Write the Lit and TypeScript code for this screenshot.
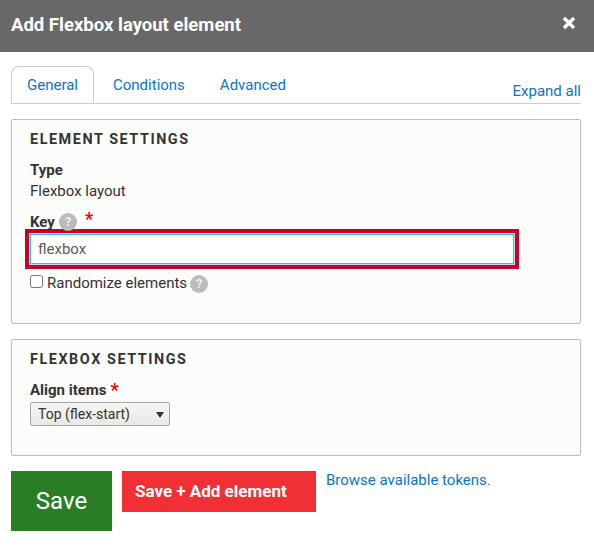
import { LitElement, css, html } from "lit";
import { customElement } from "lit/decorators.js";

@customElement("app-root")
export class AppRoot extends LitElement {
  helpIcon() {
    return html`<span class="help">?</span>`;
  }

  render() {
    return html`
      <div class="titlebar">
        <span class="title">Add Flexbox layout element</span>
        <svg class="close" width="14" height="14" viewBox="0 0 14 14">
          <path d="M2 2 L12 12 M12 2 L2 12" stroke="#fff" stroke-width="3.4" fill="none" />
        </svg>
      </div>
      <div class="content">
        <div class="tabs">
          <a class="tab active">General</a>
          <a class="tab">Conditions</a>
          <a class="tab">Advanced</a>
          <a class="expand">Expand all</a>
        </div>

        <section class="panel first">
          <h3>Element settings</h3>
          <div class="label type-label">Type</div>
          <div class="value">Flexbox layout</div>
          <div class="label key-label">
            Key ${this.helpIcon()} <span class="req key-req">*</span>
          </div>
          <input class="key-input" type="text" value="flexbox" />
          <label class="check">
            <input type="checkbox" />
            <span>Randomize elements</span>
            ${this.helpIcon()}
          </label>
        </section>

        <section class="panel second">
          <h3>Flexbox settings</h3>
          <div class="label align-label">Align items <span class="req">*</span></div>
          <div class="select">
            <span>Top (flex-start)</span>
            <i class="caret"></i>
          </div>
        </section>

        <div class="actions">
          <button class="save">Save</button>
          <button class="save-add">Save + Add element</button>
          <a class="tokens">Browse available tokens.</a>
        </div>
      </div>
    `;
  }

  static styles = css`
    :host {
      display: block;
      width: 594px;
      height: 548px;
      background: #fff;
      font-family: Roboto, sans-serif;
      font-size: 15px;
      color: #333;
      overflow: hidden;
    }

    .titlebar {
      display: flex;
      align-items: center;
      justify-content: space-between;
      height: 52px;
      padding: 0 18px 0 11px;
      box-sizing: border-box;
      background: #686868;
      color: #fff;
    }

    .title {
      font-size: 18.5px;
      font-weight: 700;
      margin-bottom: 2px;
    }

    .close {
      margin-bottom: 6px;
    }

    .content {
      padding: 15px 13px 0 11px;
    }

    .tabs {
      display: flex;
      align-items: flex-end;
      height: 37px;
      box-sizing: border-box;
      border-bottom: 1px solid #ccc;
    }

    .tab {
      height: 37px;
      box-sizing: border-box;
      padding: 9px 15px 0;
      margin-right: 3px;
      color: #0b74c4;
      line-height: 18px;
      border: 1px solid transparent;
    }

    .tab.active {
      background: #fff;
      border-color: #ccc;
      border-bottom-color: #fff;
      border-radius: 8px 8px 0 0;
    }

    .expand {
      margin-left: auto;
      margin-bottom: 3px;
      color: #0b74c4;
      line-height: 18px;
    }

    .panel {
      border: 1px solid #bbb;
      border-radius: 2px;
      background: #fcfcfa;
      padding: 0 18px;
      box-sizing: border-box;
    }

    .panel.first {
      height: 205px;
      margin-top: 15px;
    }

    .panel.second {
      height: 117px;
      margin-top: 15px;
    }

    h3 {
      margin: 11px 0 0;
      font-size: 14.4px;
      line-height: 18px;
      font-weight: 700;
      letter-spacing: 1.55px;
      text-transform: uppercase;
      color: #333;
    }

    .label {
      font-weight: 700;
      line-height: 18px;
      display: flex;
      align-items: center;
    }

    .type-label {
      margin-top: 12px;
    }

    .value {
      line-height: 18px;
      margin-top: 3px;
    }

    .key-label {
      margin-top: 13px;
      height: 18px;
    }

    .help {
      display: inline-block;
      width: 18px;
      height: 18px;
      margin-left: 4px;
      border-radius: 50%;
      background: #bbb;
      color: #eee;
      font-size: 13px;
      font-weight: 700;
      line-height: 18px;
      text-align: center;
    }

    .req {
      color: #e00;
      font-size: 18px;
      margin-left: 4px;
      line-height: 14px;
    }

    .key-req {
      margin-left: 8px;
      margin-top: -6px;
    }

    .key-input {
      display: block;
      width: 484px;
      height: 30px;
      margin-top: 3px;
      padding: 0 7px 1px;
      box-sizing: border-box;
      border: 1px solid #3fb4ff;
      border-radius: 0;
      background: #fff;
      color: #595959;
      font: inherit;
      outline: none;
      box-shadow: 0 0 0 1px #b4e2ff, 0 0 0 5px #c80021;
    }

    .check {
      display: flex;
      align-items: center;
      margin-top: 10px;
      line-height: 18px;
    }

    .check input {
      width: 13px;
      height: 13px;
      margin: -3px 4px 0 0;
    }

    .check .help {
      margin: 1px 0 -1px 3px;
    }

    .align-label {
      margin-top: 12px;
    }

    .select {
      display: flex;
      align-items: center;
      justify-content: space-between;
      width: 140px;
      height: 24px;
      margin-top: 3px;
      padding: 0 5px 0 7px;
      box-sizing: border-box;
      border: 1px solid #a6a6a6;
      border-radius: 2px;
      background: linear-gradient(#f6f6f3, #e8e8e4);
      font-size: 14px;
      color: #333;
    }

    .caret {
      width: 0;
      height: 0;
      border-left: 4px solid transparent;
      border-right: 4px solid transparent;
      border-top: 6px solid #333;
      margin-top: 2px;
    }

    .actions {
      display: flex;
      align-items: flex-start;
      margin-top: 15px;
    }

    button {
      border: 0;
      color: #fff;
      font-family: inherit;
      padding: 0;
    }

    .save {
      width: 101px;
      height: 60px;
      background: #2a7f26;
      font-size: 24px;
    }

    .save-add {
      width: 194px;
      height: 41px;
      margin-left: 10px;
      padding: 0 0 2px 13px;
      text-align: left;
      background: #f03035;
      font-size: 17px;
      font-weight: 700;
    }

    .tokens {
      margin-left: 10px;
      color: #0b74c4;
      line-height: 18px;
    }
  `;
}
